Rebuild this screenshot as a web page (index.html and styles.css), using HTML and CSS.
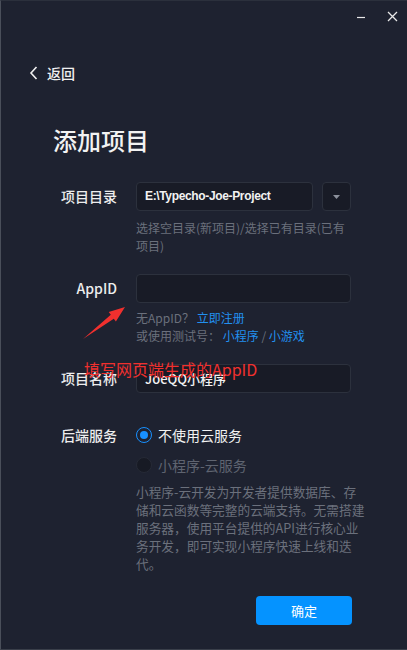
FILE: index.html
```html
<!DOCTYPE html>
<html lang="zh-CN">
<head>
<meta charset="utf-8">
<title>添加项目</title>
<link rel="stylesheet" href="styles.css">
</head>
<body>
<div class="window">
  <div class="titlebar">
    <span class="win-btn min"><svg width="10" height="10" viewBox="0 0 10 10"><path d="M1 5.5H9" stroke="#e8e8e8" stroke-width="1.2"/></svg></span>
    <span class="win-btn close"><svg width="11" height="11" viewBox="0 0 11 11"><path d="M1 1L10 10M10 1L1 10" stroke="#e8e8e8" stroke-width="1.3"/></svg></span>
  </div>

  <div class="back">
    <svg class="chev" width="10" height="14" viewBox="0 0 10 14"><path d="M7.5 1L2 7L7.5 13" fill="none" stroke="#f0f0f0" stroke-width="1.6"/></svg>
    <span>返回</span>
  </div>

  <h1 class="title">添加项目</h1>

  <div class="form">
    <div class="row">
      <div class="label">项目目录</div>
      <div class="field">
        <div class="input-group">
          <div class="input path">E:\Typecho-Joe-Project</div>
          <div class="select-btn"><svg width="7" height="4" viewBox="0 0 7 4"><path d="M0 0H7L3.5 4Z" fill="#8b909b"/></svg></div>
        </div>
        <div class="hint">选择空目录(新项目)/选择已有目录(已有项目)</div>
      </div>
    </div>

    <div class="row row-appid">
      <div class="label">AppID</div>
      <div class="field">
        <div class="input"></div>
        <div class="hint tight">无AppID？ <a class="link">立即注册</a><br>或使用测试号： <a class="link">小程序</a> / <a class="link">小游戏</a></div>
      </div>
    </div>

    <div class="row row-name">
      <div class="label">项目名称</div>
      <div class="field">
        <div class="input name">JoeQQ小程序</div>
      </div>
    </div>

    <div class="row row-service">
      <div class="label radio-label">后端服务</div>
      <div class="field">
        <div class="radio checked"><span class="dot"></span><span>不使用云服务</span></div>
        <div class="radio disabled"><span class="dot"></span><span>小程序-云服务</span></div>
        <p class="desc">小程序-云开发为开发者提供数据库、存<br>储和云函数等完整的云端支持。无需搭建<br>服务器，使用平台提供的API进行核心业<br>务开发，即可实现小程序快速上线和迭<br>代。</p>
      </div>
    </div>
  </div>

  <div class="actions">
    <button class="btn-primary">确定</button>
  </div>

  <svg class="annot-arrow" width="50" height="40" viewBox="0 0 50 40">
    <path d="M2 36L29.8 11.7L27.7 8.9L44 4L34.9 18.5L32.8 15.7Z" fill="#f0302e"/>
  </svg>
  <div class="annot-text">填写网页端生成的AppID</div>
</div>
</body>
</html>
```

FILE: styles.css
```css
* { box-sizing: border-box; }
html, body {
  margin: 0;
  padding: 0;
  background: #1e2230;
}
body {
  width: 407px;
  height: 650px;
  overflow: hidden;
  font-family: "Noto Sans CJK SC", "Noto Sans", sans-serif;
  color: #e8e8e8;
}
.window {
  position: relative;
  width: 407px;
  height: 650px;
  background: #1e2230;
  border-left: 1px solid #4a4f5a;
  border-top: 1px solid #2b303c;
  border-bottom: 1px solid #3a3f4a;
}
.titlebar {
  height: 30px;
  display: flex;
  justify-content: flex-end;
  align-items: center;
  padding-right: 9px;
  gap: 21px;
}
.win-btn { display: flex; align-items: center; }
.win-btn.min { margin-top: 1px; }

.back {
  margin-top: 32px;
  height: 20px;
  display: flex;
  align-items: center;
  padding-left: 28px;
  gap: 8px;
  font-size: 14px;
  font-weight: 500;
  color: #f0f0f0;
}
.title {
  margin: 41px 0 0 52px;
  font-size: 24px;
  line-height: 32px;
  font-weight: 500;
  color: #f2f2f2;
}
.form { margin-top: 26px; }
.row {
  display: grid;
  grid-template-columns: 116px 215px;
  column-gap: 19px;
  align-items: start;
}
.label {
  text-align: right;
  font-size: 14px;
  line-height: 29px;
  color: #ededed;
  font-weight: 500;
}
.input-group { display: flex; gap: 9px; }
.input {
  height: 29px;
  border: 1px solid #2c313d;
  border-radius: 4px;
  background: #181b26;
  padding: 0 8px;
  font-size: 13px;
  line-height: 27px;
  color: #f2f2f2;
  flex: 1;
}
.input.path {
  font-family: "Liberation Sans", "Noto Sans CJK SC", sans-serif;
  font-size: 12px;
  font-weight: bold;
  letter-spacing: -0.35px;
}
.input.name { font-weight: 500; }
.select-btn {
  width: 29px;
  height: 29px;
  border: 1px solid #2c313d;
  border-radius: 4px;
  background: #181b26;
  display: flex;
  align-items: center;
  justify-content: center;
}
.hint {
  margin-top: 8px;
  font-size: 12px;
  line-height: 18px;
  color: #6b707c;
  width: 210px;
}
.hint.tight { margin-top: 6px; width: 215px; }
.link { color: #2290ef; text-decoration: none; }
.row-appid { margin-top: 19px; }
.row-name { margin-top: 19px; }
.row-service { margin-top: 32px; }
.radio-label { line-height: 20px; }
.radio {
  display: flex;
  align-items: center;
  gap: 6px;
  height: 20px;
  font-size: 14px;
  color: #f2f2f2;
}
.radio + .radio { margin-top: 10px; }
.radio .dot {
  width: 16px;
  height: 16px;
  border-radius: 50%;
  border: 1.5px solid #1890ff;
  position: relative;
  flex: none;
}
.radio.checked .dot::after {
  content: "";
  position: absolute;
  left: 2.5px;
  top: 2.5px;
  width: 8px;
  height: 8px;
  border-radius: 50%;
  background: #1890ff;
}
.radio.disabled { color: #5f6470; }
.radio.disabled .dot {
  border: 1px solid #262a36;
  background: #171a24;
}
.desc {
  margin: 8px 0 0;
  font-size: 12.7px;
  line-height: 18px;
  color: #6b707c;
  white-space: nowrap;
}
.actions {
  display: flex;
  justify-content: flex-end;
  padding-right: 55px;
  margin-top: 23px;
}
.btn-primary {
  width: 96px;
  height: 29px;
  border: none;
  border-radius: 4px;
  background: #0593ff;
  color: #ffffff;
  font-family: "Noto Sans CJK SC", sans-serif;
  font-size: 13px;
}
.annot-arrow {
  position: absolute;
  left: 80px;
  top: 302px;
}
.annot-text {
  position: absolute;
  left: 83px;
  top: 359px;
  font-size: 16px;
  line-height: 18px;
  color: #f0302e;
  font-family: "Noto Sans CJK SC", sans-serif;
}
```
